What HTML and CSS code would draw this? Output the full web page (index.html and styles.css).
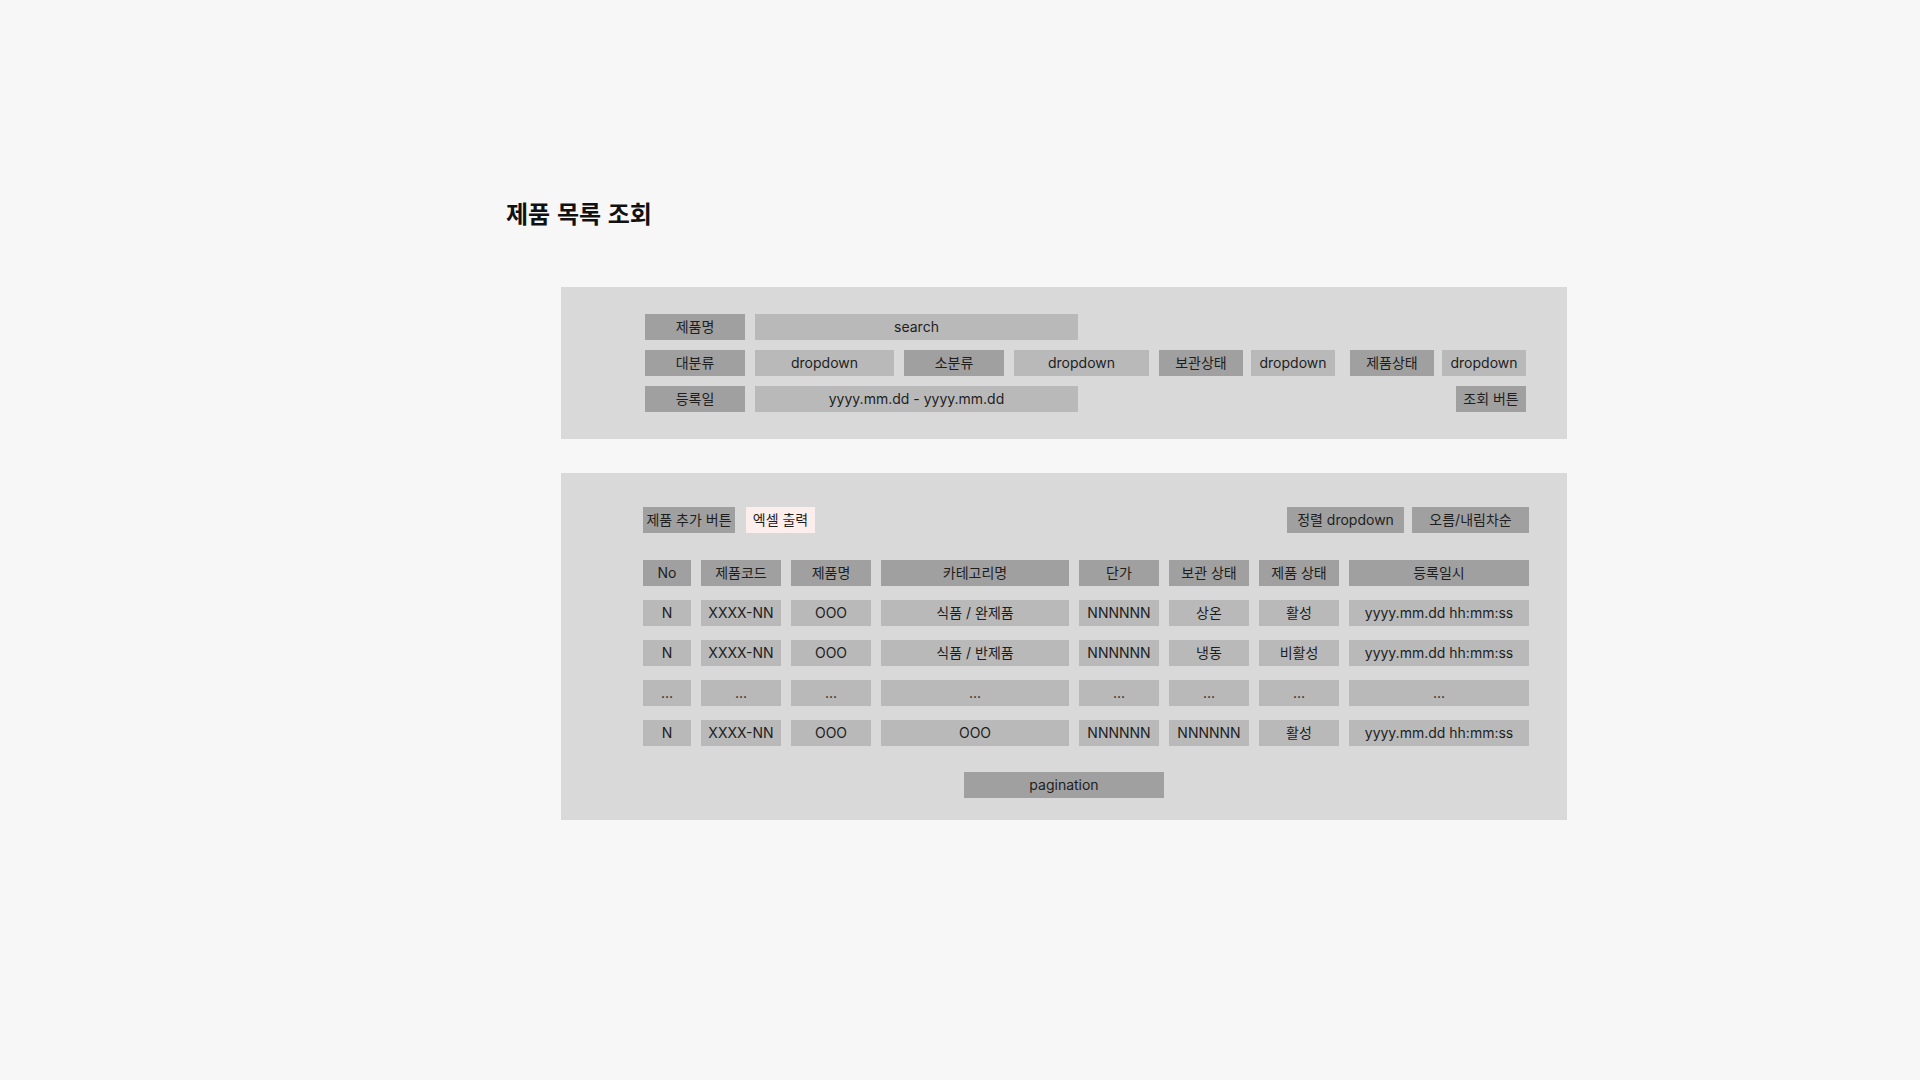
FILE: index.html
```html
<!DOCTYPE html>
<html lang="ko">
<head>
    <meta charset="UTF-8">
    <meta name="viewport" content="width=device-width, initial-scale=1.0">
    <title>제품 목록 조회</title>
    <link rel="stylesheet" href="styles.css">
</head>
<body>
    <main class="page">
        <h1 class="page-title">제품 목록 조회</h1>

        <section class="panel filter-panel">
            <div class="filter-row">
                <div class="box dark label">제품명</div>
                <div class="box light wide">search</div>
            </div>
            <div class="filter-row">
                <div class="box dark label">대분류</div>
                <div class="box light dd-large">dropdown</div>
                <div class="box dark label">소분류</div>
                <div class="box light dd-mid">dropdown</div>
                <div class="field-group">
                    <div class="box dark small">보관상태</div>
                    <div class="box light small">dropdown</div>
                </div>
                <div class="field-group last">
                    <div class="box dark small">제품상태</div>
                    <div class="box light small">dropdown</div>
                </div>
            </div>
            <div class="filter-row">
                <div class="box dark label">등록일</div>
                <div class="box light wide">yyyy.mm.dd - yyyy.mm.dd</div>
                <button class="box dark search-btn">조회 버튼</button>
            </div>
        </section>

        <section class="panel list-panel">
            <div class="toolbar">
                <div class="toolbar-left">
                    <button class="box dark add-btn">제품 추가 버튼</button>
                    <button class="box excel-btn">엑셀 출력</button>
                </div>
                <div class="toolbar-right">
                    <div class="box dark sort-box">정렬 dropdown</div>
                    <div class="box dark sort-box">오름/내림차순</div>
                </div>
            </div>

            <div class="product-table">
                <div class="box dark">No</div>
                <div class="box dark">제품코드</div>
                <div class="box dark">제품명</div>
                <div class="box dark">카테고리명</div>
                <div class="box dark">단가</div>
                <div class="box dark">보관 상태</div>
                <div class="box dark">제품 상태</div>
                <div class="box dark">등록일시</div>

                <div class="box light">N</div>
                <div class="box light">XXXX-NN</div>
                <div class="box light">OOO</div>
                <div class="box light">식품 / 완제품</div>
                <div class="box light">NNNNNN</div>
                <div class="box light">상온</div>
                <div class="box light">활성</div>
                <div class="box light">yyyy.mm.dd hh:mm:ss</div>

                <div class="box light">N</div>
                <div class="box light">XXXX-NN</div>
                <div class="box light">OOO</div>
                <div class="box light">식품 / 반제품</div>
                <div class="box light">NNNNNN</div>
                <div class="box light">냉동</div>
                <div class="box light">비활성</div>
                <div class="box light">yyyy.mm.dd hh:mm:ss</div>

                <div class="box light">...</div>
                <div class="box light">...</div>
                <div class="box light">...</div>
                <div class="box light">...</div>
                <div class="box light">...</div>
                <div class="box light">...</div>
                <div class="box light">...</div>
                <div class="box light">...</div>

                <div class="box light">N</div>
                <div class="box light">XXXX-NN</div>
                <div class="box light">OOO</div>
                <div class="box light">OOO</div>
                <div class="box light">NNNNNN</div>
                <div class="box light">NNNNNN</div>
                <div class="box light">활성</div>
                <div class="box light">yyyy.mm.dd hh:mm:ss</div>
            </div>

            <div class="box dark pagination">pagination</div>
        </section>
    </main>
</body>
</html>
```

FILE: styles.css
```css
body {
    margin: 0;
    padding: 0;
    background: #f7f7f7;
    color: #1e1e1e;
    font-family: Inter, "Noto Sans CJK KR", sans-serif;
    font-size: 14px;
}

.page {
    padding: 198px 0 0 506px;
}

.page-title {
    margin: 0 0 59px 0;
    font-family: "Noto Sans CJK KR", sans-serif;
    font-size: 24px;
    line-height: 30px;
    font-weight: 700;
    color: #111;
}

.panel {
    width: 1006px;
    margin-left: 55px;
    background: #d9d9d9;
    box-sizing: border-box;
}

.box {
    height: 26px;
    line-height: 26px;
    text-align: center;
    box-sizing: border-box;
    white-space: nowrap;
    font-family: inherit;
    font-size: 14px;
    color: #1e1e1e;
    border: none;
    padding: 0;
}

.box.dark {
    background: #a0a0a0;
}

.box.light {
    background: #b9b9b9;
}

/* filter panel */

.filter-panel {
    padding: 27px 41px 27px 84px;
    display: flex;
    flex-direction: column;
    gap: 10px;
}

.filter-row {
    display: flex;
    gap: 10px;
}

.label {
    width: 100px;
}

.wide {
    width: 323px;
}

.dd-large {
    width: 139px;
}

.dd-mid {
    width: 135px;
}

.field-group {
    display: flex;
    gap: 8px;
}

.field-group.last {
    margin-left: 5px;
}

.small {
    width: 84px;
}

.search-btn {
    width: 70px;
    margin-left: auto;
}

/* list panel */

.list-panel {
    margin-top: 34px;
    padding: 34px 38px 22px 82px;
}

.toolbar {
    display: flex;
    justify-content: space-between;
    margin-bottom: 27px;
}

.toolbar-left {
    display: flex;
    gap: 11px;
}

.toolbar-right {
    display: flex;
    gap: 8px;
}

.add-btn {
    width: 92px;
}

.excel-btn {
    width: 69px;
    background: #fdeeee;
}

.sort-box {
    width: 117px;
}

.product-table {
    display: grid;
    grid-template-columns: 48px 80px 80px 188px 80px 80px 80px 180px;
    column-gap: 10px;
    row-gap: 14px;
}

.pagination {
    width: 200px;
    margin: 26px 0 0 321px;
}
```
